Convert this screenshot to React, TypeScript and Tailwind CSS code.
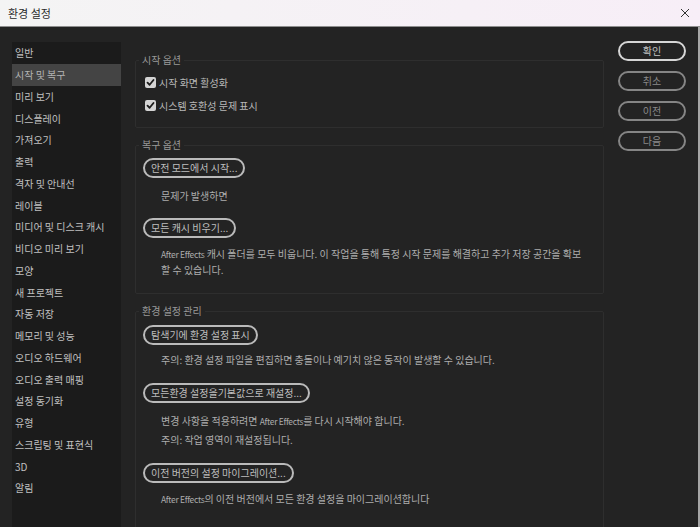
const sidebarItems = [
  "일반",
  "시작 및 복구",
  "미리 보기",
  "디스플레이",
  "가져오기",
  "출력",
  "격자 및 안내선",
  "레이블",
  "미디어 및 디스크 캐시",
  "비디오 미리 보기",
  "모양",
  "새 프로젝트",
  "자동 저장",
  "메모리 및 성능",
  "오디오 하드웨어",
  "오디오 출력 매핑",
  "설정 동기화",
  "유형",
  "스크립팅 및 표현식",
  "3D",
  "알림",
]

function CheckRow ({ label }: { label: string }) {
  return (
    <div className="flex items-center h-[23px] pl-[9px]">
      <span className="w-[11px] h-[11px] bg-[#d4d4d4] rounded-[2px] flex items-center justify-center">
        <svg width="9" height="9" viewBox="0 0 12 12">
          <polyline points="2,6.2 4.8,9 10,2.6" fill="none" stroke="#1b1b1b" strokeWidth="2.4" strokeLinecap="round" strokeLinejoin="round" />
        </svg>
      </span>
      <span className="ml-[3px] text-[10px] text-[#b8b8b8]">{ label }</span>
    </div>
  )
}

function PillButton ({ label }: { label: string }) {
  return (
    <button type="button" className="ml-[7px] h-[20px] px-[6px] rounded-full border-2 border-[#bababa] text-[10px] leading-none text-[#bebebe] flex items-center">
      { label }
    </button>
  )
}

function Section ({ title, children }: { title: string, children: React.ReactNode }) {
  return (
    <fieldset className="border border-[#2e2e2e] rounded-[2px]">
      <legend className="ml-[3px] px-[3px] text-[10px] leading-[14px] text-[#999999]">{ title }</legend>
      { children }
    </fieldset>
  )
}

function AE () {
  return <span className="text-[8.5px] tracking-[-0.3px]">After Effects</span>
}

export default function App () {
  return (
    <div className="w-[700px] h-[527px] overflow-hidden bg-[#232323] flex flex-col" style={ { fontFamily: '"Noto Sans CJK KR", "Noto Sans", sans-serif' } }>
      {/* title bar */}
      <div className="h-[27px] shrink-0 flex items-center justify-between pl-[8px] pr-[10px] bg-gradient-to-r from-[#f4f4f4] to-[#f7eef7] border-b border-[#8e8e8e]">
        <span className="text-[11px] text-[#2a2a2a]">환경 설정</span>
        <svg width="10" height="10" viewBox="0 0 10 10">
          <path d="M1 1 L9 9 M9 1 L1 9" stroke="#333" strokeWidth="1" />
        </svg>
      </div>

      <div className="flex-1 flex pl-[12px] pt-[14px] border-r-2 border-[#a6a6a6] min-h-0">
        {/* sidebar */}
        <div className="w-[109px] mt-[1px] bg-[#1b1b1b] flex flex-col">
          { sidebarItems.map((item, i) => (
            <div key={ item } className={ `h-[21.75px] shrink-0 flex items-center pl-[3px] text-[10px] ${i === 1 ? "bg-[#444444] text-[#b4b4b4]" : "text-[#c0c0c0]"}` }>
              { item }
            </div>
          )) }
        </div>

        {/* main */}
        <div className="w-[469px] ml-[14px] pt-[12px] flex flex-col gap-[10px]">
          <Section title="시작 옵션">
            <div className="pt-[4px] pb-[10px]">
              <CheckRow label="시작 화면 활성화" />
              <CheckRow label="시스템 호환성 문제 표시" />
            </div>
          </Section>

          <Section title="복구 옵션">
            <div className="pt-[6px] pb-[16px] flex flex-col items-start">
              <PillButton label="안전 모드에서 시작..." />
              <p className="mt-[10px] ml-[25px] h-[16px] leading-[16px] text-[10px] text-[#adadad]">문제가 발생하면</p>
              <div className="mt-[14px]"><PillButton label="모든 캐시 비우기..." /></div>
              <p className="mt-[8px] ml-[25px] leading-[15px] text-[10px] text-[#adadad] whitespace-nowrap">
                <AE /> 캐시 폴더를 모두 비웁니다. 이 작업을 통해 특정 시작 문제를 해결하고 추가 저장 공간을 확보
                <br />
                할 수 있습니다.
              </p>
            </div>
          </Section>

          <Section title="환경 설정 관리">
            <div className="pt-[7px] pb-[27px] flex flex-col items-start">
              <PillButton label="탐색기에 환경 설정 표시" />
              <p className="mt-[7px] ml-[25px] h-[16px] leading-[16px] text-[10px] text-[#adadad]">주의: 환경 설정 파일을 편집하면 충돌이나 예기치 않은 동작이 발생할 수 있습니다.</p>
              <div className="mt-[15px]"><PillButton label="모든환경 설정을기본값으로 재설정..." /></div>
              <p className="mt-[8px] ml-[25px] h-[19px] leading-[19px] text-[10px] text-[#adadad]">변경 사항을 적용하려면 <AE />를 다시 시작해야 합니다.</p>
              <p className="ml-[25px] h-[19px] leading-[19px] text-[10px] text-[#adadad]">주의: 작업 영역이 재설정됩니다.</p>
              <div className="mt-[14px]"><PillButton label="이전 버전의 설정 마이그레이션..." /></div>
              <p className="mt-[8px] ml-[25px] h-[16px] leading-[16px] text-[10px] text-[#adadad]"><AE />의 이전 버전에서 모든 환경 설정을 마이그레이션합니다</p>
            </div>
          </Section>
        </div>

        {/* dialog buttons */}
        <div className="w-[68px] ml-[14px] flex flex-col gap-[10px]">
          <button type="button" className="h-[20px] rounded-full border-2 border-[#d6d6d6] text-[10px] leading-none text-[#c4c4c4]">확인</button>
          <button type="button" className="h-[20px] rounded-full border-2 border-[#858585] text-[10px] leading-none text-[#8a8a8a]">취소</button>
          <button type="button" className="h-[20px] rounded-full border-2 border-[#858585] text-[10px] leading-none text-[#8a8a8a]">이전</button>
          <button type="button" className="h-[20px] rounded-full border-2 border-[#858585] text-[10px] leading-none text-[#8a8a8a]">다음</button>
        </div>
      </div>
    </div>
  )
}
